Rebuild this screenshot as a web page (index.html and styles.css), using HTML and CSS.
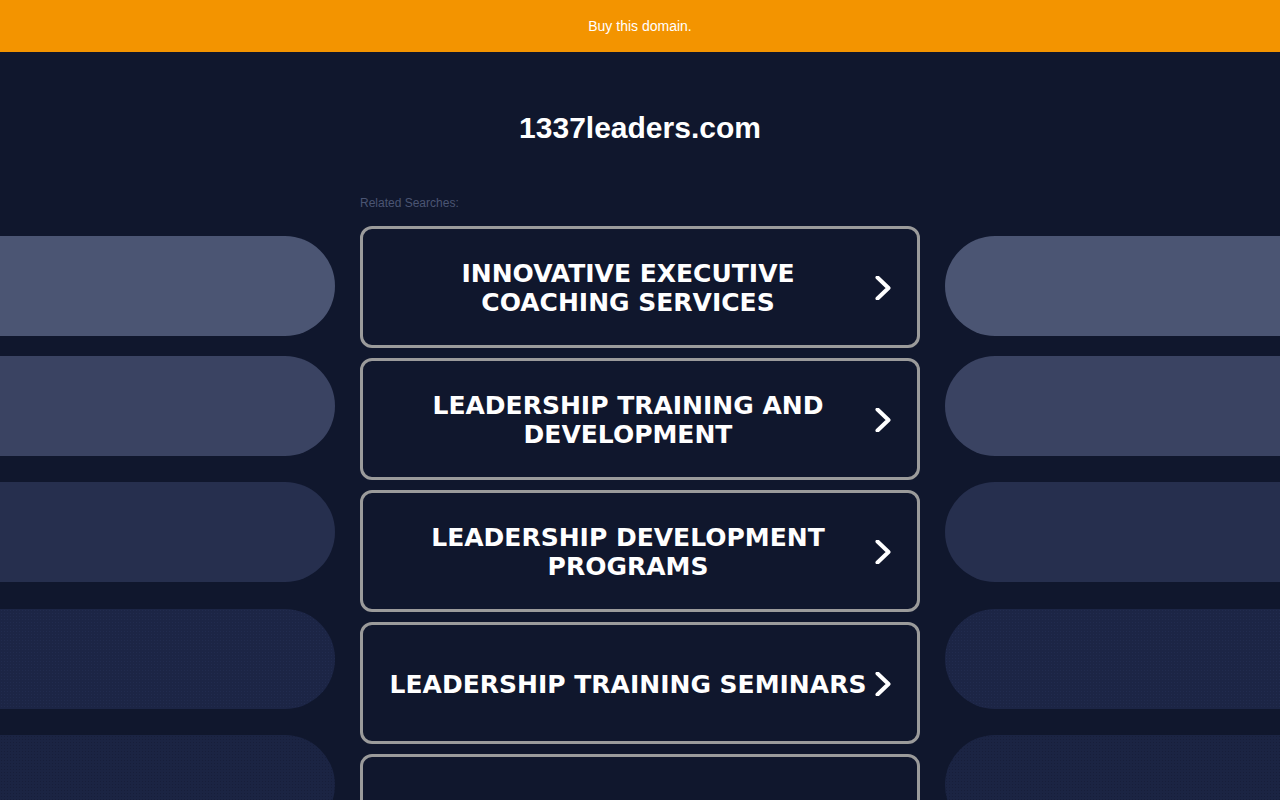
FILE: index.html
```html
<!DOCTYPE html>
<html lang="en">
<head>
<meta charset="utf-8">
<title>1337leaders.com</title>
<link rel="stylesheet" href="styles.css">
</head>
<body>
<div class="topbar"><a class="buy" href="#">Buy this domain.</a></div>
<main class="main">
  <h1 class="domain">1337leaders.com</h1>
  <div class="label-row"><span class="label">Related Searches:</span></div>
  <div class="grid">
    <div class="side side-left">
      <div class="pill p1"></div>
      <div class="pill p2"></div>
      <div class="pill p3"></div>
      <div class="pill p4"></div>
      <div class="pill p5"></div>
    </div>
    <div class="cards">
      <a class="card" href="#"><span class="card-text">INNOVATIVE EXECUTIVE COACHING SERVICES</span><svg class="chev" viewBox="0 0 24 24" width="24" height="24"><path d="M6.5 1.5 L17.5 12 L6.5 22.5" /></svg></a>
      <a class="card" href="#"><span class="card-text">LEADERSHIP TRAINING AND DEVELOPMENT</span><svg class="chev" viewBox="0 0 24 24" width="24" height="24"><path d="M6.5 1.5 L17.5 12 L6.5 22.5" /></svg></a>
      <a class="card" href="#"><span class="card-text">LEADERSHIP DEVELOPMENT PROGRAMS</span><svg class="chev" viewBox="0 0 24 24" width="24" height="24"><path d="M6.5 1.5 L17.5 12 L6.5 22.5" /></svg></a>
      <a class="card" href="#"><span class="card-text">LEADERSHIP TRAINING SEMINARS</span><svg class="chev" viewBox="0 0 24 24" width="24" height="24"><path d="M6.5 1.5 L17.5 12 L6.5 22.5" /></svg></a>
      <a class="card" href="#"><span class="card-text">LEADERSHIP COACHING</span><svg class="chev" viewBox="0 0 24 24" width="24" height="24"><path d="M6.5 1.5 L17.5 12 L6.5 22.5" /></svg></a>
    </div>
    <div class="side side-right">
      <div class="pill p1"></div>
      <div class="pill p2"></div>
      <div class="pill p3"></div>
      <div class="pill p4"></div>
      <div class="pill p5"></div>
    </div>
  </div>
</main>
</body>
</html>
```

FILE: styles.css
```css
html, body {
  margin: 0;
  padding: 0;
  height: 800px;
  overflow: hidden;
  background: #10172d;
  font-family: "Liberation Sans", Arial, sans-serif;
  color: #ffffff;
}

.topbar {
  height: 52px;
  background: #f39400;
  display: flex;
  align-items: center;
  justify-content: center;
}

.buy {
  color: #ffffff;
  font-size: 14px;
  line-height: 16px;
  text-decoration: none;
}

.main {
  display: flex;
  flex-direction: column;
}

.domain {
  margin: 58px 0 0;
  text-align: center;
  font-size: 30px;
  line-height: 36px;
  font-weight: bold;
  color: #ffffff;
}

.label-row {
  width: 560px;
  margin: 50px auto 0;
}

.label {
  display: block;
  font-size: 12px;
  line-height: 14px;
  color: #4b5573;
}

.grid {
  margin-top: 16px;
  display: grid;
  grid-template-columns: 1fr 560px 1fr;
  column-gap: 25px;
}

.side {
  display: flex;
  flex-direction: column;
  padding-top: 10px;
}

.pill {
  height: 100px;
  flex: none;
}

.side-left .pill {
  border-radius: 0 50px 50px 0;
}

.side-right .pill {
  border-radius: 50px 0 0 50px;
}

.p1 { background: #4b5573; }
.p2 { background: #3a4362; margin-top: 20px; }
.p3 { background: #262f4e; margin-top: 26px; }
.p4 {
  background-color: #1c2545;
  background-image: radial-gradient(circle, rgba(44, 56, 96, 0.35) 0.5px, transparent 0.8px);
  background-size: 3px 3px;
  margin-top: 27px;
}
.p5 {
  background-color: #1b2443;
  background-image: radial-gradient(circle, rgba(14, 20, 40, 0.35) 0.5px, transparent 0.8px);
  background-size: 3px 3px;
  margin-top: 26px;
}

.cards {
  display: flex;
  flex-direction: column;
  gap: 10px;
}

.card {
  box-sizing: border-box;
  height: 122px;
  flex: none;
  border: 3px solid #9b9b9b;
  border-radius: 12px;
  background: #10172d;
  display: flex;
  align-items: center;
  padding: 2px 22px 0 22px;
  text-decoration: none;
  color: #ffffff;
}

.card-text {
  flex: 1;
  text-align: center;
  font-family: "DejaVu Sans", Verdana, sans-serif;
  font-weight: bold;
  font-size: 25px;
  line-height: 29px;
}

.chev {
  flex: none;
  display: block;
}

.chev path {
  fill: none;
  stroke: #ffffff;
  stroke-width: 4;
  stroke-linecap: round;
  stroke-linejoin: round;
}
```
